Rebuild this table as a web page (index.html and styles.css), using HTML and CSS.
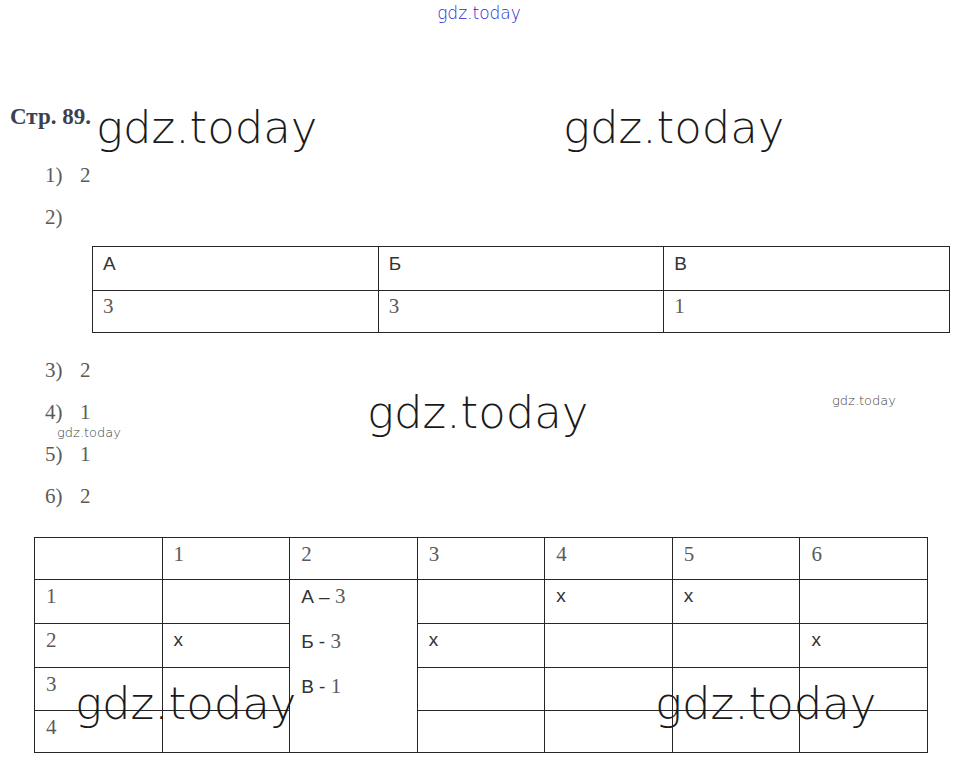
FILE: index.html
```html
<!DOCTYPE html>
<html lang="ru">
<head>
<meta charset="utf-8">
<title>Стр. 89</title>
<link rel="stylesheet" href="styles.css">
</head>
<body>
<div class="page">
  <div class="top-mark">gdz.today</div>
  <h1 class="page-title">Стр. 89.</h1>

  <div class="answers">
    <div class="answer"><span class="num">1)</span><span class="val">2</span></div>
    <div class="answer"><span class="num">2)</span></div>
  </div>

  <table class="match">
    <tr class="r-head">
      <td class="sans">А</td>
      <td class="sans">Б</td>
      <td class="sans">В</td>
    </tr>
    <tr class="r-body">
      <td>3</td>
      <td>3</td>
      <td>1</td>
    </tr>
  </table>

  <div class="answers answers-2">
    <div class="answer"><span class="num">3)</span><span class="val">2</span></div>
    <div class="answer"><span class="num">4)</span><span class="val">1</span></div>
    <div class="answer"><span class="num">5)</span><span class="val">1</span></div>
    <div class="answer"><span class="num">6)</span><span class="val">2</span></div>
  </div>

  <table class="grid">
    <colgroup>
      <col><col><col><col><col><col><col>
    </colgroup>
    <tr class="g0">
      <td></td><td>1</td><td>2</td><td>3</td><td>4</td><td>5</td><td>6</td>
    </tr>
    <tr class="g1">
      <td>1</td>
      <td></td>
      <td rowspan="4" class="merged">
        <div class="pairs">
          <div><span class="sans">А – </span>3</div>
          <div><span class="sans">Б - </span>3</div>
          <div><span class="sans">В - </span>1</div>
        </div>
      </td>
      <td></td>
      <td class="sans">x</td>
      <td class="sans">x</td>
      <td></td>
    </tr>
    <tr class="g2">
      <td>2</td>
      <td class="sans">x</td>
      <td class="sans">x</td>
      <td></td>
      <td></td>
      <td class="sans">x</td>
    </tr>
    <tr class="g3">
      <td>3</td><td></td><td></td><td></td><td></td><td></td>
    </tr>
    <tr class="g4">
      <td>4</td><td></td><td></td><td></td><td></td><td></td>
    </tr>
  </table>

  <div class="wm wm-big wm-1">gdz.today</div>
  <div class="wm wm-big wm-2">gdz.today</div>
  <div class="wm wm-big wm-3">gdz.today</div>
  <div class="wm wm-big wm-4">gdz.today</div>
  <div class="wm wm-big wm-5">gdz.today</div>
  <div class="wm wm-small wm-6">gdz.today</div>
  <div class="wm wm-small wm-7">gdz.today</div>
</div>
</body>
</html>
```
FILE: styles.css
```css
html, body {
  margin: 0;
  padding: 0;
  background: #ffffff;
}

.page {
  position: relative;
  width: 958px;
  height: 767px;
  overflow: hidden;
  font-family: "Liberation Serif", "Times New Roman", serif;
  color: #5a5a5a;
}

.top-mark {
  padding-top: 2px;
  height: 22px;
  text-align: center;
  font-family: "DejaVu Sans", sans-serif;
  font-weight: 200;
  font-size: 17px;
  line-height: 22px;
  color: #2a2ad6;
}

.page-title {
  margin: 78px 0 0 10px;
  height: 30px;
  font-family: "Liberation Serif", "Times New Roman", serif;
  font-weight: bold;
  font-size: 23px;
  line-height: 30px;
  color: #3b4150;
}

.answers {
  margin: 22px 0 0 45px;
}

.answers-2 {
  margin-top: 16px;
}

.answer {
  display: flex;
  height: 42px;
  font-size: 21px;
  line-height: 42px;
  color: #5a5a5a;
}

.num {
  width: 35px;
}

.sans {
  font-family: "Liberation Sans", Arial, sans-serif;
  font-size: 19px;
  color: #333333;
}

table {
  border-collapse: collapse;
  table-layout: fixed;
}

td {
  border: 1px solid #262626;
  vertical-align: top;
  padding: 4px 10px 0;
  font-size: 21px;
  line-height: 24px;
  color: #5a5a5a;
}

.match {
  margin: 8px 0 0 92px;
  width: 858px;
}

.match .r-head td {
  height: 38px;
  padding-top: 5px;
}

.match .r-body td {
  height: 38px;
  padding-top: 3px;
}

.grid {
  margin: 20px 0 0 34px;
  width: 894px;
}

.grid td {
  padding-left: 11px;
}

.grid .g0 td { height: 37px; padding-top: 4px; }
.grid .g1 td { height: 39px; }
.grid .g2 td { height: 39px; }
.grid .g3 td { height: 38px; }
.grid .g4 td { height: 37px; }

.grid td.merged {
  height: auto;
  padding-top: 4px;
}

.pairs {
  display: flex;
  flex-direction: column;
  gap: 20px;
}

.wm {
  position: absolute;
  font-family: "DejaVu Sans", sans-serif;
  font-weight: 200;
  line-height: 1;
  white-space: nowrap;
  color: #1a1a1a;
}

.wm-big {
  font-size: 45px;
}

.wm-small {
  font-size: 13px;
  color: #444444;
}

.wm-1 { left: 96px; top: 105px; }
.wm-2 { left: 563px; top: 105px; }
.wm-3 { left: 367px; top: 390px; }
.wm-4 { left: 75px; top: 681px; }
.wm-5 { left: 655px; top: 681px; }
.wm-6 { left: 57px; top: 426px; }
.wm-7 { left: 832px; top: 394px; }
```
